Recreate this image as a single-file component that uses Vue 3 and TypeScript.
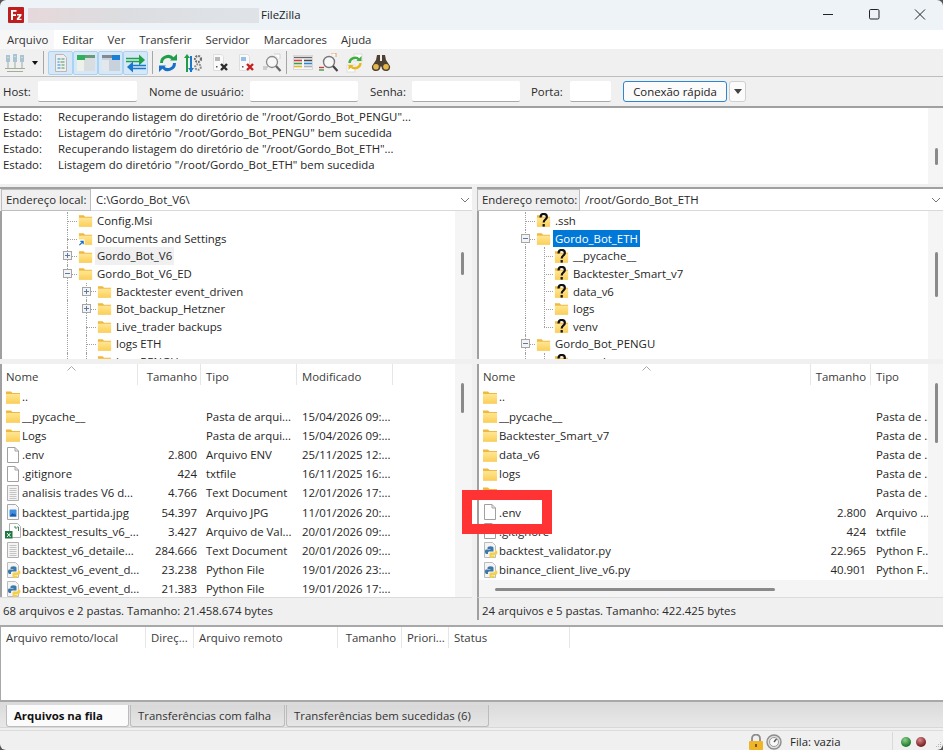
<script setup lang="ts">
interface TreeRow {
  label: string
  x: number
  icon: 'folder' | 'link' | 'unknown'
  exp?: '+' | '-'
  guides: { x: number; half?: boolean }[]
  stub: number
  selected?: boolean
  hover?: boolean
}

interface FileRow {
  name: string
  icon: string
  size?: string
  type?: string
  date?: string
}

const menus = ['Arquivo', 'Editar', 'Ver', 'Transferir', 'Servidor', 'Marcadores', 'Ajuda']

const logLines = [
  'Recuperando listagem do diretório de "/root/Gordo_Bot_PENGU"...',
  'Listagem do diretório "/root/Gordo_Bot_PENGU" bem sucedida',
  'Recuperando listagem do diretório de "/root/Gordo_Bot_ETH"...',
  'Listagem do diretório "/root/Gordo_Bot_ETH" bem sucedida',
]

const g1 = { x: 65 }
const g2 = { x: 84 }
const localTree: TreeRow[] = [
  { label: 'Config.Msi', x: 76, icon: 'folder', guides: [g1], stub: 65 },
  { label: 'Documents and Settings', x: 76, icon: 'link', guides: [g1], stub: 65 },
  { label: 'Gordo_Bot_V6', x: 76, icon: 'folder', exp: '+', guides: [g1], stub: 65, hover: true },
  { label: 'Gordo_Bot_V6_ED', x: 76, icon: 'folder', exp: '-', guides: [g1], stub: 65 },
  { label: 'Backtester event_driven', x: 95, icon: 'folder', exp: '+', guides: [g1, g2], stub: 84 },
  { label: 'Bot_backup_Hetzner', x: 95, icon: 'folder', exp: '+', guides: [g1, g2], stub: 84 },
  { label: 'Live_trader backups', x: 95, icon: 'folder', guides: [g1, g2], stub: 84 },
  { label: 'logs ETH', x: 95, icon: 'folder', guides: [g1, g2], stub: 84 },
  { label: 'logs PENGU', x: 95, icon: 'folder', guides: [g1, g2], stub: 84 },
]

const r1 = { x: 46 }
const r2 = { x: 65 }
const remoteTree: TreeRow[] = [
  { label: '.ssh', x: 57, icon: 'unknown', guides: [r1], stub: 46 },
  { label: 'Gordo_Bot_ETH', x: 57, icon: 'folder', exp: '-', guides: [r1], stub: 46, selected: true },
  { label: '__pycache__', x: 75, icon: 'unknown', guides: [r1, r2], stub: 65 },
  { label: 'Backtester_Smart_v7', x: 75, icon: 'unknown', guides: [r1, r2], stub: 65 },
  { label: 'data_v6', x: 75, icon: 'unknown', guides: [r1, r2], stub: 65 },
  { label: 'logs', x: 75, icon: 'folder', guides: [r1, r2], stub: 65 },
  { label: 'venv', x: 75, icon: 'unknown', guides: [r1, { x: 65, half: true }], stub: 65 },
  { label: 'Gordo_Bot_PENGU', x: 57, icon: 'folder', exp: '-', guides: [r1], stub: 46 },
  { label: 'pycache', x: 75, icon: 'unknown', guides: [r1, r2], stub: 65 },
]

const localFiles: FileRow[] = [
  { name: '..', icon: 'folder' },
  { name: '__pycache__', icon: 'folder', type: 'Pasta de arqui...', date: '15/04/2026 09:...' },
  { name: 'Logs', icon: 'folder', type: 'Pasta de arqui...', date: '15/04/2026 09:...' },
  { name: '.env', icon: 'blank', size: '2.800', type: 'Arquivo ENV', date: '25/11/2025 12:...' },
  { name: '.gitignore', icon: 'blank', size: '424', type: 'txtfile', date: '16/11/2025 16:...' },
  { name: 'analisis trades V6 d...', icon: 'text', size: '4.766', type: 'Text Document', date: '12/01/2026 17:...' },
  { name: 'backtest_partida.jpg', icon: 'image', size: '54.397', type: 'Arquivo JPG', date: '11/01/2026 20:...' },
  { name: 'backtest_results_v6_...', icon: 'excel', size: '3.427', type: 'Arquivo de Val...', date: '20/01/2026 09:...' },
  { name: 'backtest_v6_detaile...', icon: 'text', size: '284.666', type: 'Text Document', date: '20/01/2026 09:...' },
  { name: 'backtest_v6_event_d...', icon: 'python', size: '23.238', type: 'Python File', date: '19/01/2026 23:...' },
  { name: 'backtest_v6_event_d...', icon: 'python', size: '21.383', type: 'Python File', date: '19/01/2026 17:...' },
]

const remoteFiles: FileRow[] = [
  { name: '..', icon: 'folder' },
  { name: '__pycache__', icon: 'folder', type: 'Pasta de ..' },
  { name: 'Backtester_Smart_v7', icon: 'folder', type: 'Pasta de ..' },
  { name: 'data_v6', icon: 'folder', type: 'Pasta de ..' },
  { name: 'logs', icon: 'folder', type: 'Pasta de ..' },
  { name: 'venv', icon: 'folder', type: 'Pasta de ..' },
  { name: '.env', icon: 'blank', size: '2.800', type: 'Arquivo ...' },
  { name: '.gitignore', icon: 'blank', size: '424', type: 'txtfile' },
  { name: 'backtest_validator.py', icon: 'python', size: '22.965', type: 'Python F...' },
  { name: 'binance_client_live_v6.py', icon: 'python', size: '40.901', type: 'Python F...' },
]

const queueCols = [
  { label: 'Arquivo remoto/local', w: 145, cls: '' },
  { label: 'Direç...', w: 48, cls: '' },
  { label: 'Arquivo remoto', w: 144, cls: '' },
  { label: 'Tamanho', w: 64, cls: 'right' },
  { label: 'Priori...', w: 47, cls: '' },
  { label: 'Status', w: 121, cls: '' },
]

const tabs = ['Arquivos na fila', 'Transferências com falha', 'Transferências bem sucedidas (6)']

function treeIcon(r: TreeRow) {
  return r.icon === 'unknown' ? '#i-unknown' : r.icon === 'link' ? '#i-link' : '#i-folder'
}
</script>

<template>
  <div class="win">
    <svg class="defs" width="0" height="0" aria-hidden="true">
      <defs>
        <linearGradient id="fold" x1="0" y1="0" x2="0" y2="1">
          <stop offset="0" stop-color="#ffe694" />
          <stop offset="1" stop-color="#fbcf58" />
        </linearGradient>
        <symbol id="i-folder" viewBox="0 0 16 16">
          <path d="M1 2.500h5l1.500 1.500H15v10.500H1z" fill="#eeb93e" />
          <path d="M1 5h14v9.500H1z" fill="url(#fold)" />
        </symbol>
        <symbol id="i-link" viewBox="0 0 16 16">
          <path d="M1 2.500h5l1.500 1.500H15v10.500H1z" fill="#eeb93e" />
          <path d="M1 5h14v9.500H1z" fill="url(#fold)" />
          <rect x="0" y="9" width="7" height="7" fill="#fff" />
          <path d="M1.500 15l3.500-3.500M2.500 11h3v3" stroke="#1a6fc9" stroke-width="1.300" fill="none" />
        </symbol>
        <symbol id="i-unknown" viewBox="0 0 16 16">
          <path d="M1 2.500h5l1.500 1.500H15v10.500H1z" fill="#eeb93e" />
          <path d="M1 5h14v9.500H1z" fill="url(#fold)" />
          <path d="M4.800 4.800c0-2.500 1.400-3.800 3.400-3.800s3.400 1.200 3.400 3.200c0 2.800-3.400 2.800-3.400 5.800" fill="none" stroke="#111" stroke-width="2.300" />
          <rect x="7" y="11.800" width="2.400" height="2.700" fill="#111" />
        </symbol>
        <symbol id="i-blank" viewBox="0 0 16 16">
          <path d="M2.500.5h7.500l3.500 3.500v11.500h-11z" fill="#fff" stroke="#a0a0a0" />
          <path d="M10 .5V4h3.500" fill="none" stroke="#a0a0a0" />
        </symbol>
        <symbol id="i-text" viewBox="0 0 16 16">
          <path d="M2.500.5h11v15h-11z" fill="#f4f4f4" stroke="#b0b0b0" />
          <path d="M4.500 3.500h7M4.500 5.500h7M4.500 7.500h7M4.500 9.500h7M4.500 11.500h7M4.500 13.500h7" stroke="#c4c4c4" />
        </symbol>
        <symbol id="i-image" viewBox="0 0 16 16">
          <path d="M2.500.5h8l3 3v12h-11z" fill="#f8f8f8" stroke="#a8a8a8" />
          <rect x="4.500" y="5.500" width="7" height="7" rx="1" fill="#3f8fe0" />
          <path d="M4.500 12.500l3-3.500 1.500 1.500 1-1 1.500 3z" fill="#1b5aa8" />
        </symbol>
        <symbol id="i-excel" viewBox="0 0 16 16">
          <path d="M4.500.5h8l3 3v11h-11z" fill="#fff" stroke="#b0b0b0" />
          <path d="M9 4h2v2M12 4h1.500v4" stroke="#3a8a4e" fill="none" />
          <rect x="0" y="8" width="7.500" height="7.500" fill="#1e7a3f" />
          <path d="M2 10l3.500 4M5.500 10L2 14" stroke="#fff" />
        </symbol>
        <symbol id="i-python" viewBox="0 0 16 16">
          <path d="M2.500.5h8l3 3v12h-11z" fill="#f4f4f4" stroke="#bcbcbc" />
          <path d="M5.500 7V6c0-1 1-1.800 3-1.800s3 .8 3 1.800v3.500H7.500c-1 0-1.500.5-1.500 1.500v1H4.500c-1 0-1.500-1-1.500-2.500S3.500 7.500 4.500 7.500h4V7z" fill="#3b77a8" />
          <path d="M13 8c1.500 0 2.500 1 2.500 2.500S14.500 13 13 13H9.500v.5h3v.8c0 1-.9 1.700-2.500 1.700s-2.500-.7-2.500-1.700V12c0-1 .5-1.500 1.500-1.500h3c.5 0 1-.5 1-1.200z" fill="#f4cf4c" />
        </symbol>
      </defs>
    </svg>

    <header class="titlebar">
      <svg class="logo" viewBox="0 0 16 16" aria-hidden="true">
        <rect width="16" height="16" rx="1" fill="#bf1e1e" />
        <path d="M3 3h5.500v1.800H5v2.500h3v1.700H5v4H3z" fill="#fff" />
        <path d="M9 7h4.500v1.500l-2.500 3.200h2.500V13H8.800v-1.400l2.500-3.200H9z" fill="#fff" />
      </svg>
      <div class="title-blur"></div>
      <span class="title-text">FileZilla</span>
      <div class="win-ctrls">
        <svg viewBox="0 0 46 30" aria-hidden="true"><path d="M18 14.500h10" stroke="#222" fill="none" /></svg>
        <svg viewBox="0 0 46 30" aria-hidden="true"><rect x="18.500" y="9.500" width="9.500" height="9.500" rx="1.200" stroke="#222" fill="none" /></svg>
        <svg viewBox="0 0 46 30" aria-hidden="true"><path d="M18 9.500l10 10M28 9.500l-10 10" stroke="#222" fill="none" /></svg>
      </div>
    </header>

    <nav class="menubar">
      <span v-for="m in menus" :key="m" class="menu-item">{{ m }}</span>
    </nav>

    <div class="toolbar">
      <button class="tb tb-site" title="Gerenciador de sites">
        <svg viewBox="0 0 20 20" width="20" height="20" aria-hidden="true">
          <g fill="#a9c3d6"><rect x="1" y="2" width="4" height="7" /><rect x="8" y="1" width="4" height="8" /><rect x="15" y="2" width="4" height="7" /></g>
          <g fill="#d5e2bd"><rect x="2" y="4" width="2" height="1" /><rect x="9" y="3" width="2" height="1" /><rect x="16" y="4" width="2" height="1" /></g>
          <path d="M3 9v6M10 9v6M17 9v6M0 15.500h20M2 18.500h16" stroke="#a3ad9b" fill="none" />
        </svg>
      </button>
      <span class="tb-caret"></span>
      <span class="tb-sep"></span>

      <button class="tb tb-on">
        <svg viewBox="0 0 20 20" width="20" height="20" aria-hidden="true">
          <path d="M4.500 1.500h8l3 3v14h-11z" fill="#efefef" stroke="#b8b8b8" />
          <path d="M6.500 6h3M6.500 9h2M6.500 12h3M6.500 15h3" stroke="#5eaedd" stroke-width="1.400" />
          <path d="M10.500 6h3M9.500 9h4M10.500 12h3M10.500 15h3" stroke="#8ab08c" stroke-width="1.400" />
        </svg>
      </button>
      <button class="tb tb-on">
        <svg viewBox="0 0 20 20" width="20" height="20" aria-hidden="true">
          <rect x="1" y="2" width="18" height="16" fill="#d8dde0" />
          <rect x="1" y="2" width="18" height="3" fill="#6a9a78" />
          <rect x="1" y="2" width="8" height="5" fill="#2eb15a" />
          <rect x="1" y="7" width="7" height="11" fill="#eef1ea" />
        </svg>
      </button>
      <button class="tb tb-on">
        <svg viewBox="0 0 20 20" width="20" height="20" aria-hidden="true">
          <rect x="1" y="2" width="18" height="16" fill="#c8d2dc" />
          <rect x="1" y="2" width="18" height="3" fill="#7f8a94" />
          <rect x="11" y="2" width="8" height="5" fill="#1c7fd6" />
          <rect x="1" y="7" width="7" height="11" fill="#e4e8ec" />
        </svg>
      </button>
      <button class="tb tb-on">
        <svg viewBox="0 0 20 20" width="20" height="20" aria-hidden="true">
          <path d="M0 5.500h15M0 8.500h15" stroke="#1fa04a" stroke-width="1.600" />
          <path d="M13 1.500l6 5.500-6 5.500z" fill="#1fa04a" />
          <path d="M5 12.500h15M5 15.500h15" stroke="#1a78cc" stroke-width="1.600" />
          <path d="M7 8.500l-6 5.500 6 5.500z" fill="#1a78cc" />
        </svg>
      </button>
      <span class="tb-sep tb-sep-a"></span>

      <button class="tb tb-m">
        <svg viewBox="0 0 20 20" width="20" height="20" aria-hidden="true">
          <path d="M3.500 10a6.500 6.500 0 0 1 11.500-4.200" fill="none" stroke="#1f9e4a" stroke-width="3" />
          <path d="M12 7.500h7V1z" fill="#1f9e4a" />
          <path d="M16.500 10A6.500 6.500 0 0 1 5 14.200" fill="none" stroke="#1a6fc9" stroke-width="3" />
          <path d="M8 12.500H1V19z" fill="#1a6fc9" />
        </svg>
      </button>
      <button class="tb tb-m">
        <svg viewBox="0 0 20 20" width="20" height="20" aria-hidden="true">
          <path d="M3 19V3" stroke="#1f9e4a" stroke-width="2" />
          <path d="M7 19V3" stroke="#1a78cc" stroke-width="2" />
          <path d="M0 5l3-4 3 4z" fill="#1f9e4a" />
          <path d="M4 15l3 4 3-4z" fill="#1a78cc" />
          <circle cx="14" cy="6" r="3" fill="none" stroke="#6f6f6f" stroke-width="2.200" stroke-dasharray="1.800 1" />
          <circle cx="14" cy="14" r="2.800" fill="none" stroke="#8a8a8a" stroke-width="2" stroke-dasharray="1.800 1" />
        </svg>
      </button>
      <button class="tb tb-m">
        <svg viewBox="0 0 20 20" width="20" height="20" aria-hidden="true">
          <path d="M3.500 1.500h8l2 2v14h-10z" fill="#fafafa" stroke="#dedede" />
          <path d="M5 5h5M5 7h5" stroke="#777" />
          <rect x="6" y="13" width="1.500" height="1.500" fill="#555" />
          <path d="M11 11l6 6M17 11l-6 6" stroke="#2b2b2b" stroke-width="2.400" />
        </svg>
      </button>
      <button class="tb tb-m">
        <svg viewBox="0 0 20 20" width="20" height="20" aria-hidden="true">
          <path d="M3.500 1.500h8l2 2v14h-10z" fill="#fafafa" stroke="#dedede" />
          <path d="M5 5h5M5 7h5" stroke="#2a86d6" />
          <rect x="6" y="13" width="1.500" height="1.500" fill="#555" />
          <path d="M11 11l6 6M17 11l-6 6" stroke="#c8201f" stroke-width="2.400" />
        </svg>
      </button>
      <button class="tb tb-m">
        <svg viewBox="0 0 20 20" width="20" height="20" aria-hidden="true">
          <path d="M12 1h6v5" fill="#fff" stroke="#d0d0d0" />
          <circle cx="10" cy="9" r="5.500" fill="#f7f7f7" stroke="#888" stroke-width="1.300" />
          <path d="M14 13l4.500 5" stroke="#666" stroke-width="2.200" />
          <path d="M1 14h5M1 16h4" stroke="#aaa" />
        </svg>
      </button>
      <span class="tb-sep tb-sep-b"></span>

      <button class="tb tb-w">
        <svg viewBox="0 0 20 20" width="20" height="20" aria-hidden="true">
          <rect x="0.500" y="2.500" width="19" height="14" fill="#f6f6f6" stroke="#d8d8d8" />
          <path d="M1 4.500h18" stroke="#686868" stroke-width="1.400" />
          <path d="M1 7.500h8" stroke="#d63b3b" stroke-width="1.600" />
          <path d="M11 7.500h8" stroke="#4a4a4a" stroke-width="1.600" />
          <path d="M1 10.500h8" stroke="#3b9b4b" stroke-width="1.600" />
          <path d="M11 10.500h8" stroke="#2a86d6" stroke-width="1.600" />
          <path d="M1 13.500h8" stroke="#e0b72c" stroke-width="1.600" />
          <path d="M11 13.500h8" stroke="#b0b0b0" stroke-width="1.600" />
        </svg>
      </button>
      <button class="tb tb-m">
        <svg viewBox="0 0 20 20" width="20" height="20" aria-hidden="true">
          <path d="M12 0h5v4" fill="#fff" stroke="#d8a060" />
          <circle cx="10" cy="9" r="5.500" fill="#f7f7f7" stroke="#777" stroke-width="1.400" />
          <path d="M14 13l4.500 5" stroke="#444" stroke-width="2.200" />
          <path d="M0 14.500h5" stroke="#d63b3b" stroke-width="1.400" />
          <path d="M0 17h5" stroke="#3b9b4b" stroke-width="1.400" />
        </svg>
      </button>
      <button class="tb tb-m">
        <svg viewBox="0 0 20 20" width="20" height="20" aria-hidden="true">
          <rect x="9" y="1" width="8" height="7" fill="#fff" stroke="#ddd" />
          <rect x="2" y="12" width="8" height="7" fill="#fff" stroke="#ddd" />
          <path d="M4.500 10a5.500 5.500 0 0 1 9.500-3.500" fill="none" stroke="#3fae3c" stroke-width="2.400" />
          <path d="M11.500 8h5V3z" fill="#3fae3c" />
          <path d="M15.500 10a5.500 5.500 0 0 1-9.500 3.500" fill="none" stroke="#e8b71c" stroke-width="2.400" />
          <path d="M8.500 12h-5v5z" fill="#e8b71c" />
        </svg>
      </button>
      <button class="tb tb-m">
        <svg viewBox="0 0 20 20" width="20" height="20" aria-hidden="true">
          <path d="M6 2h3v6h2V2h3l1 5 4 6c.5 3-1 5-4 5s-4.500-2-4.500-4.500h-1C9.500 16 8 18 5 18s-4.500-2-4-5l4-6z" fill="#4e4132" />
          <circle cx="5" cy="13.800" r="2.800" fill="#e6b84a" />
          <circle cx="15" cy="13.800" r="2.800" fill="#e6b84a" />
        </svg>
      </button>
    </div>

    <form class="quick" @submit.prevent>
      <label class="q-label q-host">Host:</label>
      <input class="q-input q-w-host" />
      <label class="q-label q-user">Nome de usuário:</label>
      <input class="q-input q-w-user" />
      <label class="q-label q-pass">Senha:</label>
      <input class="q-input q-w-pass" />
      <label class="q-label q-port">Porta:</label>
      <input class="q-input q-w-port" />
      <button class="q-btn" type="button">Conexão rápida</button>
      <button class="q-drop" type="button"><span></span></button>
    </form>

    <section class="log">
      <div class="log-lines">
        <div v-for="(line, i) in logLines" :key="i" class="log-line">
          <span class="log-tag">Estado:</span><span>{{ line }}</span>
        </div>
      </div>
      <div class="vbar"><div class="thumb thumb-r" style="margin-top: 40px; height: 17px"></div></div>
    </section>

    <main class="panes">
      <section class="pane pane-l">
        <div class="addr">
          <span class="addr-label">Endereço local:</span>
          <div class="addr-input">
            <span>C:\Gordo_Bot_V6\</span>
            <svg viewBox="0 0 10 6" width="10" height="6" aria-hidden="true"><path d="M1 1l4 4 4-4" fill="none" stroke="#777" /></svg>
          </div>
        </div>
        <div class="tree-wrap">
          <div class="tree">
            <div v-for="r in localTree" :key="r.label" class="t-row" :style="{ paddingLeft: r.x + 'px' }">
              <span v-for="g in r.guides" :key="g.x" class="t-guide" :style="{ left: g.x + 'px' }"></span>
              <span class="t-stub" :style="{ left: r.stub + 'px', width: r.x - r.stub - 1 + 'px' }"></span>
              <span v-if="r.exp" class="t-exp" :class="{ minus: r.exp === '-' }" :style="{ left: r.stub - 4 + 'px' }"></span>
              <svg class="t-ico" aria-hidden="true"><use :href="treeIcon(r)" /></svg>
              <span class="t-text" :class="{ sel: r.selected, hov: r.hover }">{{ r.label }}</span>
            </div>
          </div>
          <div class="vbar"><div class="thumb" style="margin-top: 41px; height: 23px"></div></div>
        </div>
        <div class="gap-h"></div>
        <div class="list-wrap">
          <div class="list list-l">
            <div class="l-head">
              <span class="h-nome">Nome</span><span class="h-size">Tamanho</span><span class="h-type">Tipo</span><span class="h-date">Modificado</span>
              <svg class="sort" viewBox="0 0 9 5" width="9" height="5" aria-hidden="true"><path d="M.5 4.500l4-4 4 4" fill="none" stroke="#a8a8a8" /></svg>
            </div>
            <div v-for="(f, i) in localFiles" :key="i" class="l-row">
              <span class="c-name"><svg class="f-ico" aria-hidden="true"><use :href="'#i-' + f.icon" /></svg>{{ f.name }}</span>
              <span class="c-size">{{ f.size }}</span>
              <span class="c-type">{{ f.type }}</span>
              <span class="c-date">{{ f.date }}</span>
            </div>
          </div>
          <div class="vbar"><div class="thumb" style="margin-top: 19px; height: 30px"></div></div>
        </div>
        <div class="status">68 arquivos e 2 pastas. Tamanho: 21.458.674 bytes</div>
      </section>

      <section class="pane pane-r">
        <div class="addr">
          <span class="addr-label">Endereço remoto:</span>
          <div class="addr-input">
            <span>/root/Gordo_Bot_ETH</span>
            <svg viewBox="0 0 10 6" width="10" height="6" aria-hidden="true"><path d="M1 1l4 4 4-4" fill="none" stroke="#777" /></svg>
          </div>
        </div>
        <div class="tree-wrap">
          <div class="tree">
            <div v-for="r in remoteTree" :key="r.label" class="t-row" :style="{ paddingLeft: r.x + 'px' }">
              <span v-for="g in r.guides" :key="g.x" class="t-guide" :class="{ half: g.half }" :style="{ left: g.x + 'px' }"></span>
              <span class="t-stub" :style="{ left: r.stub + 'px', width: r.x - r.stub - 1 + 'px' }"></span>
              <span v-if="r.exp" class="t-exp" :class="{ minus: r.exp === '-' }" :style="{ left: r.stub - 4 + 'px' }"></span>
              <svg class="t-ico" aria-hidden="true"><use :href="treeIcon(r)" /></svg>
              <span class="t-text" :class="{ sel: r.selected }">{{ r.label }}</span>
            </div>
          </div>
          <div class="vbar"><div class="thumb thumb-r" style="margin-top: 41px; height: 45px"></div></div>
        </div>
        <div class="gap-h"></div>
        <div class="list-wrap">
          <div class="list-col">
            <div class="list list-r">
              <div class="l-head">
                <span class="h-nome">Nome</span><span class="h-size">Tamanho</span><span class="h-type">Tipo</span>
                <svg class="sort" viewBox="0 0 9 5" width="9" height="5" aria-hidden="true"><path d="M.5 4.500l4-4 4 4" fill="none" stroke="#a8a8a8" /></svg>
              </div>
              <div v-for="(f, i) in remoteFiles" :key="i" class="l-row">
                <span class="c-name"><svg class="f-ico" aria-hidden="true"><use :href="'#i-' + f.icon" /></svg>{{ f.name }}</span>
                <span class="c-size">{{ f.size }}</span>
                <span class="c-type">{{ f.type }}</span>
              </div>
            </div>
            <div class="hbar"><div class="hthumb"></div></div>
          </div>
          <div class="vbar"><div class="thumb thumb-r" style="margin-top: 19px; height: 60px"></div></div>
        </div>
        <div class="status">24 arquivos e 5 pastas. Tamanho: 422.425 bytes</div>
      </section>
    </main>

    <section class="queue">
      <div class="q-head">
        <span v-for="c in queueCols" :key="c.label" class="q-col" :class="c.cls" :style="{ width: c.w + 'px' }">{{ c.label }}</span>
      </div>
    </section>

    <div class="tabs">
      <span v-for="(t, i) in tabs" :key="t" class="tab" :class="{ active: i === 0 }">{{ t }}</span>
    </div>

    <footer class="statusbar">
      <svg class="lock" viewBox="0 0 16 16" width="16" height="16" aria-hidden="true">
        <path d="M4 7V4.500a4 4 0 0 1 8 0V7" fill="none" stroke="#8a8a8a" stroke-width="1.800" />
        <rect x="1" y="7" width="14" height="9" rx="1" fill="#f0b429" />
        <rect x="7" y="10" width="2" height="3" fill="#7a5a10" />
      </svg>
      <svg class="gauge" viewBox="0 0 16 16" width="16" height="16" aria-hidden="true">
        <circle cx="8" cy="8" r="7" fill="#ddd" stroke="#8c8c8c" stroke-width="1.400" />
        <circle cx="8" cy="8" r="4.500" fill="#f8f8f8" stroke="#9c9c9c" />
        <path d="M8 8l2.500-3" stroke="#555" stroke-width="1.400" />
      </svg>
      <span class="fila">Fila: vazia</span>
      <span class="sb-sep"></span>
      <span class="led led-g"></span>
      <span class="led led-r"></span>
      <svg class="grip" viewBox="0 0 8 8" width="8" height="8" aria-hidden="true">
        <g fill="#b5b5b5"><rect x="6" y="0" width="1" height="1" /><rect x="4" y="2" width="1" height="1" /><rect x="6" y="2" width="1" height="1" /><rect x="2" y="4" width="1" height="1" /><rect x="4" y="4" width="1" height="1" /><rect x="6" y="4" width="1" height="1" /></g>
      </svg>
    </footer>

    <div class="callout"></div>
  </div>
</template>

<style>
html, body { margin: 0; background: #f0f0f0; }
</style>

<style scoped>
.win {
  position: relative;
  width: 943px;
  height: 750px;
  overflow: hidden;
  display: flex;
  flex-direction: column;
  background: #f0f0f0;
  color: #262626;
  font: 11.4px/16px "Open Sans", "Noto Sans", sans-serif;
}
.win::after {
  content: '';
  position: absolute;
  inset: 0;
  border-radius: 6px;
  box-shadow: 0 0 0 6px #555;
  pointer-events: none;
}
.defs { position: absolute; }

.titlebar {
  height: 30px;
  flex: none;
  display: flex;
  align-items: center;
  background: #eef3f8;
  padding-left: 8px;
}
.logo { width: 16px; height: 16px; margin-right: 4px; }
.title-blur {
  width: 231px;
  height: 15px;
  background: linear-gradient(90deg, #e6d8da, #dcdde0 40%, #dfe3e8);
}
.title-text { margin-left: 2px; color: #222; }
.win-ctrls { margin-left: auto; display: flex; }
.win-ctrls svg { width: 46px; height: 30px; display: block; }

.menubar {
  height: 19px;
  flex: none;
  display: flex;
  align-items: center;
  background: #fff;
  padding-left: 7px;
  gap: 14px;
  line-height: 19px;
}
.menu-item { color: #333; }
.menu-item:first-child { margin-left: -7px; padding: 0 6px 0 7px; margin-right: -6px; background: #f7f7f7; }

.toolbar {
  height: 27px;
  flex: none;
  display: flex;
  align-items: center;
  padding-left: 5px;
  border-bottom: 1px solid #bdbdbd;
}
.tb {
  appearance: none;
  padding: 0;
  margin: 0;
  border: 0;
  background: none;
  display: flex;
  align-items: center;
  justify-content: center;
  height: 24px;
}
.tb-site { width: 20px; }
.tb-caret {
  width: 0;
  height: 0;
  margin-left: 7px;
  border: 3.5px solid transparent;
  border-top: 4px solid #111;
  border-bottom: 0;
}
.tb-sep {
  width: 1px;
  height: 23px;
  margin: 0 4px 0 5px;
  background: #a6a6a6;
}
.tb-on {
  box-sizing: border-box;
  width: 25px;
  background: #d6e8f8;
  border: 1px solid #a9d2f3;
  border-radius: 2px;
}
.tb-m { width: 26px; }
.tb-w { width: 25.500px; }
.tb-sep-a { margin: 0 2px 0 4px; }
.tb-sep-b { margin: 0 3px 0 1px; }

.quick {
  height: 29px;
  flex: none;
  display: flex;
  align-items: center;
  border-bottom: 2px solid #a0a0a0;
}
.q-label { color: #2a2a2a; }
.q-host { margin-left: 3px; width: 35px; }
.q-user { margin-left: 12px; width: 101px; }
.q-pass { margin-left: 12px; width: 42px; }
.q-port { margin-left: 11px; width: 39px; }
.q-input {
  height: 21px;
  padding: 0;
  box-sizing: border-box;
  border: 0;
  border-bottom: 1px solid #a8a8a8;
  border-radius: 2px;
  background: #fff;
}
.q-w-host { width: 99px; }
.q-w-user { width: 108px; }
.q-w-pass { width: 108px; }
.q-w-port { width: 41px; }
.q-btn {
  width: 104px;
  height: 21px;
  margin-left: 12px;
  padding: 0;
  border: 1px solid #2f86d0;
  border-radius: 3px;
  background: #fbfbfb;
  font: inherit;
  color: #222;
}
.q-drop {
  width: 17px;
  height: 21px;
  margin-left: 2px;
  padding: 0;
  border: 1px solid #d0d0d0;
  border-radius: 3px;
  background: #fbfbfb;
  display: flex;
  align-items: center;
  justify-content: center;
}
.q-drop span {
  width: 0;
  height: 0;
  border: 4.500px solid transparent;
  border-top: 5px solid #444;
  border-bottom: 0;
}

.log {
  height: 76px;
  flex: none;
  display: flex;
  background: #fff;
}
.log-lines { flex: 1; padding: 1px 0 0 3px; }
.log-line { display: flex; height: 16px; line-height: 16px; }
.log-tag { width: 55px; }

.vbar { width: 15px; flex: none; background: #f5f5f5; }
.pane-l .vbar { width: 17px; }
.thumb { width: 3px; margin-left: 6px; background: #8a8a8a; border-radius: 2px; }
.thumb-r { margin-left: 7px; }

.panes {
  flex: none;
  height: 438px;
  margin-top: 3px;
  display: grid;
  grid-template-columns: 472px 466px;
  column-gap: 5px;
}
.pane { display: flex; flex-direction: column; min-width: 0; }
.pane-l { border-top: 2px solid #a0a0a0; }
.pane-r { border-top: 2px solid #a0a0a0; }

.addr { height: 22px; flex: none; display: flex; }
.addr-label {
  flex: none;
  box-sizing: border-box;
  height: 22px;
  padding: 0 4px;
  line-height: 20px;
  background: #f0f0f0;
  border: 1px solid #bdbdbd;
  color: #2a2a2a;
  white-space: nowrap;
}
.pane-l .addr-label { width: 90px; margin-left: 1px; }
.pane-r .addr-label { width: 103px; }
.addr-input {
  flex: 1;
  display: flex;
  align-items: center;
  justify-content: space-between;
  padding: 0 2px 0 5px;
  background: #fff;
  border-bottom: 1px solid #d9d9d9;
}

.tree-wrap {
  height: 148px;
  flex: none;
  display: flex;
  background: #fff;
  border-left: 2px solid #a0a0a0;
}
.tree { flex: 1; overflow: hidden; padding-top: 1.200px; min-width: 0; }
.t-row {
  position: relative;
  height: 17.600px;
  display: flex;
  align-items: center;
  box-sizing: border-box;
}
.t-guide {
  position: absolute;
  top: 0;
  bottom: 0;
  border-left: 1px dotted #a0a0a0;
}
.t-guide.half { bottom: 50%; }
.t-stub {
  position: absolute;
  top: 50%;
  border-top: 1px dotted #a0a0a0;
}
.t-exp {
  position: absolute;
  top: 4px;
  box-sizing: border-box;
  width: 9px;
  height: 9px;
  border: 1px solid #a6a6a6;
  background:
    linear-gradient(#5b7aa8, #5b7aa8) center / 5px 1px no-repeat,
    linear-gradient(#5b7aa8, #5b7aa8) center / 1px 5px no-repeat,
    #f4f4f4;
}
.t-exp.minus {
  background:
    linear-gradient(#5b7aa8, #5b7aa8) center / 5px 1px no-repeat,
    #f4f4f4;
}
.t-ico { width: 15px; height: 15px; flex: none; position: relative; margin-right: 2px; }
.t-text { padding: 0 2px; line-height: 17.600px; position: relative; white-space: nowrap; }
.t-text.hov { background: #f0f0f0; }
.t-text.sel { background: #0078d7; color: #fff; }

.gap-h { height: 5px; flex: none; background: #f0f0f0; }

.list-wrap {
  height: 233px;
  flex: none;
  display: flex;
  background: #fff;
  border-left: 2px solid #a0a0a0;
}
.list { flex: 1; min-width: 0; overflow: hidden; position: relative; }
.list-col { flex: 1; min-width: 0; display: flex; flex-direction: column; }
.l-head { height: 23.400px; display: flex; line-height: 26px; color: #3a3a3a; }
.l-head span { box-sizing: border-box; height: 21px; border-right: 1px solid #e6e6e6; }
.sort { position: absolute; top: 2px; }
.l-row { height: 19.200px; display: flex; line-height: 19.200px; white-space: nowrap; }
.l-row span { display: block; box-sizing: border-box; flex: none; }
.l-row .c-name { display: flex; align-items: center; }
.f-ico { width: 16px; height: 16px; flex: none; margin: 0 1px 0 3px; }
.c-size { text-align: right; padding-right: 4px; }
.c-type { padding-left: 5px; }
.c-date { padding-left: 5px; }
.h-nome { padding-left: 4px; }
.h-size { text-align: right; padding-right: 3px; }
.h-type { padding-left: 5px; }
.h-date { padding-left: 5px; }

.list-l .h-nome, .list-l .c-name { width: 136px; }
.list-l .h-size, .list-l .c-size { width: 63px; }
.list-l .h-type, .list-l .c-type { width: 96px; }
.list-l .h-date, .list-l .c-date { width: 96px; }
.list-l .sort { left: 65px; }

.list-r .h-nome, .list-r .c-name { width: 332px; }
.list-r .h-size, .list-r .c-size { width: 60px; }
.list-r .h-type, .list-r .c-type { width: 57px; }
.list-r .c-size { padding-right: 5px; }
.list-r .h-size { padding-right: 4px; }
.list-r .h-type { border-right: 0; }
.list-r .sort { left: 163px; }

.hbar { height: 17px; flex: none; background: #f5f5f5; }
.hthumb { width: 280px; height: 3px; margin: 8px 0 0 16px; background: #8a8a8a; border-radius: 2px; }

.status {
  height: 23px;
  flex: none;
  box-sizing: border-box;
  padding-left: 3px;
  line-height: 25px;
  border-top: 1px solid #dcdcdc;
  color: #2a2a2a;
  background: #f0f0f0;
}
.pane-r .status { border-left: 2px solid #a0a0a0; }

.queue {
  height: 77px;
  flex: none;
  box-sizing: border-box;
  background: #fff;
  border: 2px solid #a8a8a8;
  border-width: 2px 0 2px 1px;
}
.q-head { display: flex; height: 21px; line-height: 22px; color: #3a3a3a; }
.q-col {
  box-sizing: border-box;
  padding-left: 5px;
  border-right: 1px solid #e6e6e6;
  white-space: nowrap;
  overflow: hidden;
}
.q-col.right { text-align: right; padding-right: 5px; }

.tabs {
  height: 26px;
  flex: none;
  box-sizing: border-box;
  display: flex;
  padding: 0 6px;
  gap: 1px;
  background: linear-gradient(#dadada, #e8e8e8);
  border-bottom: 1px solid #d8d8d8;
}
.tab {
  height: 22px;
  margin-top: 3px;
  box-sizing: border-box;
  padding: 0 7px;
  line-height: 22px;
  border: 1px solid #bcbcbc;
  border-top: 0;
  border-radius: 0 0 3px 3px;
  background: linear-gradient(#d8d8d8, #e6e6e6);
  color: #333;
  white-space: nowrap;
}
.tab:nth-child(1) { width: 123px; }
.tab:nth-child(2) { width: 155px; }
.tab:nth-child(3) { width: 203px; }
.tab.active { background: #fbfbfb; font-weight: 700; color: #111; }

.statusbar {
  flex: none;
  height: 20px;
  margin-top: 2px;
  box-sizing: border-box;
  display: flex;
  align-items: center;
  padding-top: 2px;
  background: #f0f0f0;
  border-top: 1px solid #dcdcdc;
}
.lock { margin-left: 748px; }
.gauge { margin-left: 2px; }
.fila { margin-left: 8px; width: 102px; }
.sb-sep { width: 1px; height: 19px; background: #d9d9d9; }
.led { width: 10px; height: 10px; border-radius: 50%; }
.led-g { margin-left: 8px; background: radial-gradient(circle at 40% 30%, #8cd08c, #1f7a2a 70%); }
.led-r { margin-left: 5px; background: radial-gradient(circle at 40% 30%, #d88a8a, #7a1f25 70%); }
.grip { margin-left: auto; margin-right: 1px; align-self: flex-end; }

/* anotacao vermelha do print, fica por cima da lista */
.callout {
  position: absolute;
  left: 462px;
  top: 490px;
  width: 70px;
  height: 24px;
  border: 10px solid #ff3333;
}
.callout::before {
  content: '';
  position: absolute;
  left: 0;
  top: 0;
  bottom: 0;
  width: 5px;
  background: #fff;
}
</style>
